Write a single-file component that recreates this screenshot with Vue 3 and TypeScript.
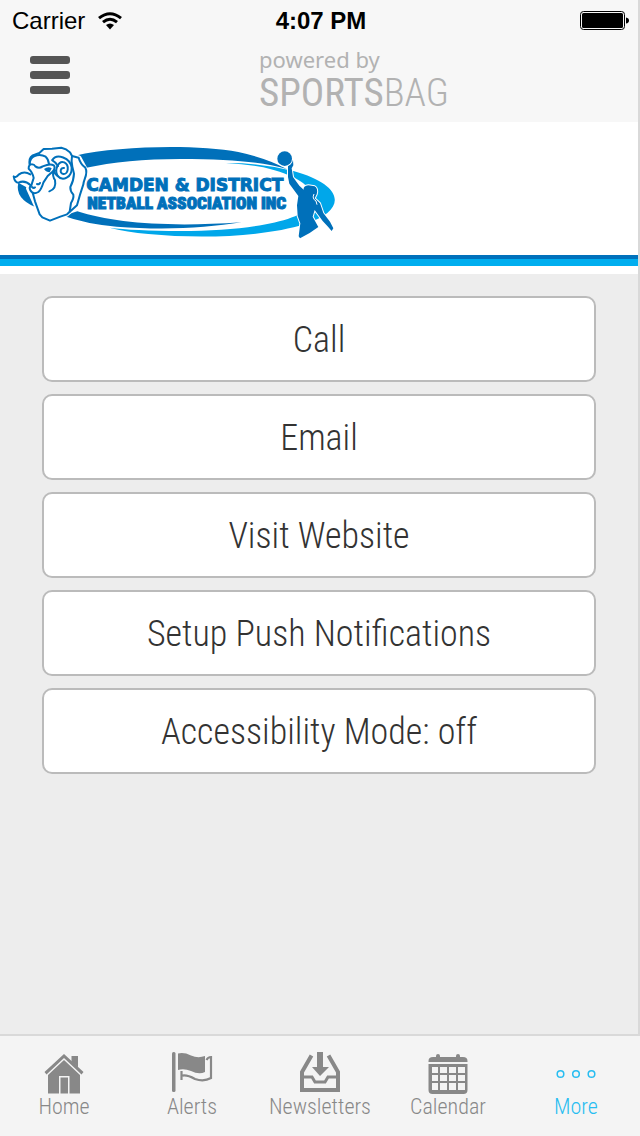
<script setup lang="ts">
import { ref } from 'vue'

type TabId = 'home' | 'alerts' | 'newsletters' | 'calendar' | 'more'

interface Tab {
  id: TabId
  label: string
}

const accessibility = ref(false)
const active = ref<TabId>('more')

const tabs: Tab[] = [
  { id: 'home', label: 'Home' },
  { id: 'alerts', label: 'Alerts' },
  { id: 'newsletters', label: 'Newsletters' },
  { id: 'calendar', label: 'Calendar' },
  { id: 'more', label: 'More' },
]
</script>

<template>
  <div class="app">
    <div class="page">
      <header class="top">
        <div class="status">
          <div class="carrier">
            <span>Carrier</span>
            <svg width="24" height="18" viewBox="0 0 24 18" aria-hidden="true">
              <g fill="none" stroke="#000" stroke-width="3">
                <path d="M1 6.200Q12 -2.800 23 6.200" />
                <path d="M5 10.200Q12 4.400 19 10.200" />
              </g>
              <path d="M8 13Q12 9.800 16 13L12 17.500Z" />
            </svg>
          </div>
          <strong class="time">4:07 PM</strong>
          <svg class="battery" width="50" height="20" viewBox="0 0 50 20" aria-hidden="true">
            <rect x="0.500" y="0.500" width="44" height="18" rx="3" fill="none" stroke="#000" />
            <rect x="2" y="2" width="41" height="15" rx="1.500" />
            <path d="M46 6.500Q49 7 49 9.500T46 12.500Z" />
          </svg>
        </div>
        <div class="brandbar">
          <button class="menu" type="button" aria-label="Menu">
            <span></span><span></span><span></span>
          </button>
          <div class="brand">
            <span class="powered">powered by</span>
            <span class="sportsbag">SPORTS<span class="thin">BAG</span></span>
          </div>
        </div>
      </header>

      <div class="banner">
        <svg width="360" height="115" viewBox="0 0 1080 345" role="img" aria-label="Camden &amp; District Netball Association Inc">
          <path fill="#00a7ea" d="M678 84Q780 83 880 108C1032 150 1046 224 915 267C800 304 610 313 445 297Q380 291 328 278Q400 287 540 288C750 288 900 258 935 210C955 165 900 122 790 97Q740 87 678 84Z" />
          <path fill="#0070ba" d="M225 62C360 32 590 28 715 51Q802 70 860 102C790 82 700 72 540 72Q380 72 255 99Z" />
          <path fill="#0070ba" d="M190 242L232 229C340 264 500 277 725 262C620 279 490 286 350 275Q255 266 190 242Z" />
          <path fill="#0070ba" d="M55 143Q44 190 106 216L82 158Z" />
          <path fill="#fff" stroke="#fff" stroke-width="14" stroke-linejoin="round" d="M90 88L92 66L117 54L131 42L184 38L209 52L216 62L237 68L259 108L248 150L230 211L200 238L150 257L124 243L103 200L85 160L102 120Z" />
          <g fill="none" stroke="#0070ba" stroke-width="6" stroke-linecap="round" stroke-linejoin="round">
            <path fill="#fff" d="M90 92C86 77 90 66 98 61L118 54L131 42L156 41L184 38Q199 41 210 52L216 63L236 68Q241 87 256 98C266 116 251 132 250 148Q240 177 231 211L201 238L181 245L150 257L127 247L119 238L105 199L98 173" />
            <path d="M216 63Q213 78 217 95L222 116Q221 138 211 156Q210 168 220 179Q222 190 213 204L209 230" />
            <path fill="#fff" d="M86 101C85 82 103 88 106 94Q117 102 128 94Q151 85 161 91Q167 96 160 108L143 123L130 143Q124 163 115 171Q99 180 91 166Q86 156 94 151L101 129Q98 112 86 101Z" />
            <path d="M89 87Q90 68 104 63Q121 56 137 65Q145 72 147 87" />
            <path fill="#fff" d="M157 75C170 54 211 68 215 98C216 128 188 140 173 123C162 105 175 75 193 82C210 91 204 119 190 117C176 114 183 96 192 99" />
            <path d="M157 76Q168 82 174 93M165 106Q159 112 173 123M160 108Q157 125 165 135Q170 162 148 169" />
            <path fill="#fff" d="M91 118Q72 107 56 119Q47 130 41 124Q44 143 56 143Q74 134 92 151" />
            <path d="M96 156Q101 161 105 157M111 147Q117 150 120 144" />
          </g>
          <path fill="#0070ba" d="M132 102Q145 92 155 100L149 112Q139 112 132 102Z" />
          <g fill="#0070ba" stroke="#fff" stroke-width="6" paint-order="stroke" stroke-linejoin="round">
            <path d="M864 83L879 75L880 91L875 100L879 126L898 152L911 164Q909 153 925 151L944 154Q955 161 950 178L944 190L960 205L970 234L990 260L1000 280L995 288L982 273L968 258L944 225L938 245L955 276L929 294L900 310L896 304L901 265L893 243L891 211L895 183L868 146L864 126Z" />
            <circle cx="854" cy="71" r="22" />
          </g>
          <path fill="none" stroke="#fff" stroke-width="3" d="M942 177Q935 191 948 198L951 209" />
          <text class="logo-top" x="259" y="167">CAMDEN &amp; DISTRICT</text>
          <text class="logo-bottom" x="262" y="222">NETBALL ASSOCIATION INC</text>
        </svg>
      </div>

      <main class="content">
        <button type="button">Call</button>
        <button type="button">Email</button>
        <button type="button">Visit Website</button>
        <button type="button">Setup Push Notifications</button>
        <button type="button" :aria-pressed="accessibility" @click="accessibility = !accessibility">
          Accessibility Mode: {{ accessibility ? 'on' : 'off' }}
        </button>
      </main>
    </div>

    <nav class="tabs">
      <button
        v-for="tab in tabs"
        :key="tab.id"
        type="button"
        class="tab"
        :class="{ active: active === tab.id }"
        @click="active = tab.id"
      >
        <svg width="44" height="44" viewBox="0 0 44 44" fill="currentColor" aria-hidden="true">
          <template v-if="tab.id === 'home'">
            <path d="M22 2L41.500 20L39.500 22.500L22 6L4.500 22.500L2.500 20Z" />
            <path d="M29.500 4h6.500v11.500l-6.500-6Z" />
            <path fill-rule="evenodd" d="M22 8L38 23V41.500H6V23ZM17 24V41.500H18.500V25.500H26V41.500H27.500V24Z" />
          </template>
          <template v-else-if="tab.id === 'alerts'">
            <rect x="2" y="0" width="3.500" height="40" rx="1.500" />
            <path d="M8 1.500Q14 0 21 3.500Q28 6.500 35 4V20Q29 23 21 19Q14 16 8 18Z" />
            <path d="M36.500 8Q38 5 41 5V26Q34 30 25 27Q16 22 11 24M11.500 19V28" fill="none" stroke="currentColor" stroke-width="2.200" />
          </template>
          <template v-else-if="tab.id === 'newsletters'">
            <path d="M19 0h6v15h6L22 24L14 15h5Z" />
            <path d="M13.500 3.500L4 20V38H40V20L30.500 3.500" fill="none" stroke="currentColor" stroke-width="4" />
            <path d="M4 25H14L17 30H27L30 25H40" fill="none" stroke="currentColor" stroke-width="3" />
          </template>
          <template v-else-if="tab.id === 'calendar'">
            <path d="M2.500 10V9Q2.500 5 7 5H10V4Q10 2 12 2T14 4V5H30V4Q30 2 32 2T34 4V5H37Q41.500 5 41.500 9V10Z" />
            <path fill-rule="evenodd" d="M2.500 12H41.500V38Q41.500 42 37.500 42H6.500Q2.500 42 2.500 38ZM6 15v6h6v-6Zm8 0v6h7v-6Zm9 0v6h7v-6Zm9 0v6h7v-6ZM6 23v6h6v-6Zm8 0v6h7v-6Zm9 0v6h7v-6Zm9 0v6h7v-6ZM6 31v7h6v-7Zm8 0v7h7v-7Zm9 0v7h7v-7Zm9 0v7h7v-7Z" />
          </template>
          <g v-else fill="none" stroke="currentColor" stroke-width="1.500">
            <circle cx="6.500" cy="22" r="3.300" />
            <circle cx="22" cy="22" r="3.300" />
            <circle cx="37.500" cy="22" r="3.300" />
          </g>
        </svg>
        <span>{{ tab.label }}</span>
      </button>
    </nav>
  </div>
</template>

<style>
body {
  margin: 0;
}
</style>

<style scoped>
.app {
  min-height: 100vh;
  display: flex;
  flex-direction: column;
  background: #ededed;
  font-family: "Roboto Condensed", Roboto, sans-serif;
}
button {
  margin: 0;
  font: inherit;
  cursor: pointer;
}
.page {
  flex: 1;
  display: flex;
  flex-direction: column;
  border-right: 2px solid #d9d9d9;
}
.top {
  background: #f7f7f7;
  padding-bottom: 6px;
}
.status {
  display: grid;
  grid-template-columns: 1fr auto 1fr;
  align-items: center;
  padding: 0 8px 0 12px;
  font: 24px/42px "Liberation Sans", Arial, sans-serif;
}
.carrier {
  display: flex;
  align-items: center;
  gap: 13px;
}
.battery {
  justify-self: end;
}
.brandbar {
  display: grid;
  grid-template-columns: 40px 1fr;
  align-items: start;
  padding: 6px 0 0 30px;
}
.menu {
  padding: 8px 0 0;
  display: flex;
  flex-direction: column;
  gap: 7px;
  border: 0;
  background: none;
}
.menu span {
  height: 8px;
  border-radius: 3px;
  background: #555;
}
.brand {
  justify-self: center;
  display: flex;
  flex-direction: column;
  color: #b2b2b2;
}
.powered {
  font: 22px/22px "Noto Sans", "Open Sans", sans-serif;
}
.sportsbag {
  font-size: 39px;
  line-height: 46px;
}
.thin {
  font-weight: 300;
}
.banner {
  padding: 13px 0 5px;
  background: #fff;
  border-bottom: 4px solid #0072bc;
}
.banner svg {
  display: block;
}
.logo-top,
.logo-bottom {
  fill: #0070ba;
  stroke: #0070ba;
  stroke-width: 3px;
}
.logo-top {
  font: 700 51px "DejaVu Sans", sans-serif;
}
.logo-bottom {
  font: 900 52px "Roboto Condensed", Roboto, sans-serif;
}
.content {
  flex: 1;
  display: flex;
  flex-direction: column;
  gap: 12px;
  padding: 37px 42px 22px;
  background: linear-gradient(#00aeef 7px, #fff 7px, #fff 15px, #ededed 15px);
}
.content button {
  height: 86px;
  padding: 2px 6px 0;
  border: 2px solid #bbb;
  border-radius: 10px;
  background: #fff;
  color: #333;
  font-size: 36px;
  font-weight: 300;
}
.tabs {
  display: grid;
  grid-template-columns: repeat(5, 1fr);
  border-top: 2px solid #d9d9d9;
  background: #f4f4f4;
}
.tab {
  display: flex;
  flex-direction: column;
  align-items: center;
  padding: 16px 0 18px;
  border: 0;
  background: none;
  color: #888;
  font-size: 22px;
  font-weight: 300;
  line-height: 22px;
}
.tab.active {
  color: #27bdf1;
}
</style>
